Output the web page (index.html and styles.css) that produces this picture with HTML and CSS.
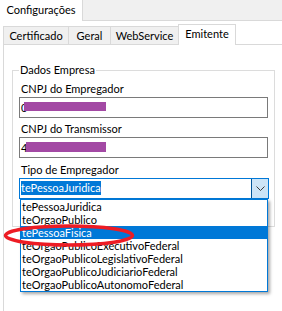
FILE: index.html
```html
<!DOCTYPE html>
<html lang="pt-BR">

<head>
	<meta charset="UTF-8">
	<meta name="viewport" content="width=device-width, initial-scale=1.0">
	<title>Configurações</title>
	<link rel="stylesheet" href="styles.css">
</head>

<body>

	<div class="window">
		<div class="top-tabs">
			<div class="top-tab">Configurações</div>
			<div class="top-fill"></div>
		</div>

		<div class="top-panel">
			<div class="tabs">
				<div class="tab tab-cert">Certificado</div>
				<div class="tab tab-geral">Geral</div>
				<div class="tab tab-ws">WebService</div>
				<div class="tab tab-emit active">Emitente</div>
			</div>

			<div class="tab-panel">
				<fieldset class="group">
					<legend>Dados Empresa</legend>

					<div class="field">
						<label>CNPJ do Empregador</label>
						<div class="textbox">0<span class="redact redact-1"></span></div>
					</div>

					<div class="field">
						<label>CNPJ do Transmissor</label>
						<div class="textbox">4<span class="redact redact-2"></span></div>
					</div>

					<div class="field field-combo">
						<label>Tipo de Empregador</label>
						<div class="combo">
							<div class="combo-value"><span class="selected-text">tePessoaJuridica</span></div>
							<div class="combo-btn">
								<svg width="9" height="5" viewBox="0 0 9 5">
									<path d="M0.5 0.5 L4.5 4.5 L8.5 0.5" fill="none" stroke="#3c3c3c" stroke-width="1" />
								</svg>
							</div>
							<ul class="combo-list">
								<li>tePessoaJuridica</li>
								<li>teOrgaoPublico</li>
								<li class="hover">tePessoaFisica</li>
								<li>teOrgaoPublicoExecutivoFederal</li>
								<li>teOrgaoPublicoLegislativoFederal</li>
								<li>teOrgaoPublicoJudiciarioFederal</li>
								<li>teOrgaoPublicoAutonomoFederal</li>
							</ul>
						</div>
					</div>
				</fieldset>
			</div>
		</div>

		<!-- red highlight drawn over the screenshot -->
		<svg class="mark" width="282" height="311" viewBox="0 0 282 311">
			<ellipse cx="69" cy="235.5" rx="63.5" ry="9.5" fill="none" stroke="#ed1c24" stroke-width="3.5" />
		</svg>
	</div>

</body>

</html>
```

FILE: styles.css
```css
*,
*::before,
*::after {
	box-sizing: border-box;
}

body {
	margin: 0;
	padding: 0;
	font-family: Lato, "Liberation Sans", sans-serif;
	font-size: 11px;
	color: #000;
	background-color: #fff;
	overflow: hidden;
}

.window {
	position: relative;
	width: 282px;
	height: 311px;
	overflow: hidden;
}

/* outer page control */
.top-tabs {
	display: flex;
	height: 21px;
	background-color: #f0f0f0;
}

.top-tab {
	width: 83px;
	height: 21px;
	line-height: 20px;
	text-align: center;
	background-color: #fff;
	border-right: 1px solid #d9d9d9;
}

.top-fill {
	flex: 1;
	border-bottom: 1px solid #d9d9d9;
}

.top-panel {
	background-color: #fff;
	height: 290px;
}

/* inner page control */
.tabs {
	display: flex;
	align-items: flex-end;
	height: 23px;
	margin-left: 3px;
	position: relative;
	z-index: 1;
}

.tab {
	height: 18px;
	line-height: 17px;
	text-align: center;
	background-color: #f0f0f0;
	border: 1px solid #d9d9d9;
	border-bottom: none;
	margin-left: -1px;
}

.tab-cert {
	width: 66px;
	margin-left: 0;
}

.tab-geral {
	width: 43px;
}

.tab-ws {
	width: 69px;
}

.tab-emit {
	width: 58px;
}

.tab.active {
	height: 21px;
	line-height: 18px;
	padding-bottom: 2px;
	margin-bottom: -1px;
	background-color: #fff;
}

.tab-panel {
	margin-left: 3px;
	height: 267px;
	border-top: 1px solid #d9d9d9;
	border-left: 1px solid #d9d9d9;
	padding: 17px 0 0 8px;
}

/* group box */
.group {
	width: 263px;
	margin: 0;
	padding: 3px 0 27px 6px;
	border: 1px solid #dcdcdc;
}

.group legend {
	padding: 0 1px;
	line-height: 16px;
}

.field label {
	display: block;
	height: 16px;
	line-height: 16px;
	padding-left: 2px;
}

.textbox {
	position: relative;
	width: 249px;
	height: 21px;
	margin-bottom: 3px;
	padding-left: 1px;
	line-height: 19px;
	border: 1px solid #7a7a7a;
	background-color: #fff;
}

.redact {
	position: absolute;
	top: 4px;
	height: 9px;
	background-color: #a349a4;
}

.redact-1 {
	left: 4px;
	width: 82px;
}

.redact-2 {
	left: 6px;
	width: 80px;
	height: 10px;
}

.field-combo {
	margin-top: 4px;
}

/* combo box, dropped down */
.combo {
	position: relative;
	display: flex;
	width: 250px;
	height: 21px;
	border: 1px solid #0078d7;
	background-color: #fff;
}

.combo-value {
	flex: 1;
	padding: 2px 0 0 1px;
}

.selected-text {
	display: inline-block;
	line-height: 14px;
	color: #fff;
	background-color: #0078d7;
}

.combo-btn {
	width: 17px;
	display: flex;
	align-items: center;
	justify-content: center;
	background-color: #cce4f7;
	border-left: 1px solid #005499;
}

.combo-list {
	position: absolute;
	top: 20px;
	left: 0;
	width: 248px;
	margin: 0;
	padding: 0;
	list-style: none;
	background-color: #fff;
	border: 1px solid #0078d7;
	box-shadow: 2px 2px 3px rgba(0, 0, 0, 0.35);
	z-index: 2;
}

.combo-list li {
	height: 13px;
	line-height: 13px;
	padding-left: 1px;
	white-space: nowrap;
}

.combo-list li.hover {
	color: #fff;
	background-color: #0078d7;
}

.mark {
	position: absolute;
	top: 0;
	left: 0;
	z-index: 5;
	pointer-events: none;
}
```
